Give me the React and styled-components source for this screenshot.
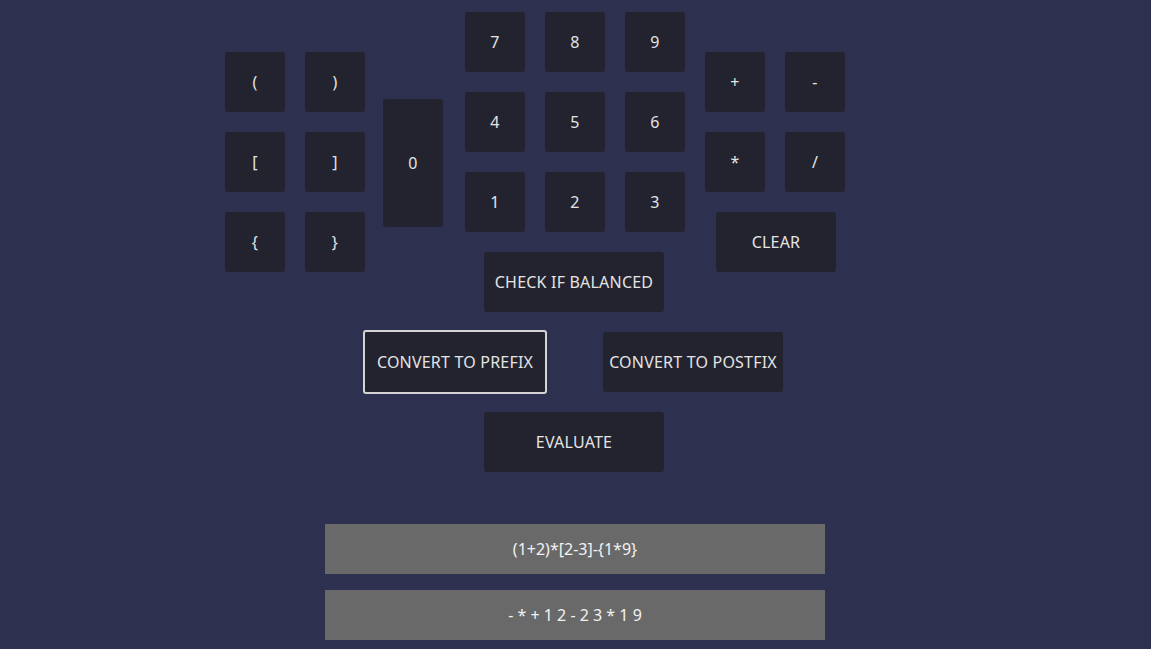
import React, { useState } from "react";
import styled, { createGlobalStyle } from "styled-components";

const GlobalStyle = createGlobalStyle`
  html, body {
    margin: 0;
    padding: 0;
    background: #2e3050;
    font-family: "Noto Sans", "Open Sans", sans-serif;
  }
`;

const Page = styled.div`
  display: flex;
  flex-direction: column;
  align-items: center;
  padding: 12px 1px 0 0;
  min-height: 637px;
`;

const Keypad = styled.div`
  display: grid;
  grid-template-columns: 1fr auto 1fr;
  align-items: center;
  column-gap: 20px;
  width: 100%;
`;

const LeftSide = styled.div`
  justify-self: end;
  display: flex;
  align-items: center;
  gap: 18px;
  margin-right: 2px;
`;

const RightSide = styled.div`
  justify-self: start;
  display: flex;
  flex-direction: column;
  align-items: center;
  gap: 20px;
`;

const Center = styled.div`
  display: flex;
  flex-direction: column;
  align-items: center;
  gap: 20px;
`;

const KeyGrid = styled.div`
  display: grid;
  grid-template-columns: repeat(${(p) => p.cols}, 60px);
  gap: 20px;
`;

const Key = styled.button`
  width: ${(p) => p.w || 60}px;
  height: ${(p) => p.h || 60}px;
  background: #22232f;
  color: #e4e4e4;
  border: ${(p) => (p.active ? "2px solid #d4d4d4" : "none")};
  border-radius: 3px;
  font-family: inherit;
  font-size: 16px;
  letter-spacing: 0.2px;
  padding: 0;
  margin: ${(p) => (p.active ? "-2px" : "0")};
  box-sizing: content-box;
  cursor: pointer;
  text-transform: uppercase;
`;

const ZeroKey = styled(Key)`
  margin-top: 2px;
`;

const WideKey = styled(Key)`
  margin-right: 2px;
`;

const ClearKey = styled(Key)`
  margin-left: 2px;
`;

const ActionRow = styled.div`
  display: flex;
  gap: 58px;
  margin-top: 20px;
  margin-right: 2px;
`;

const Single = styled.div`
  margin-top: 20px;
  margin-right: 2px;
`;

const Display = styled.div`
  width: 500px;
  height: 50px;
  background: #696969;
  color: #f2f2f2;
  font-size: 16px;
  display: flex;
  align-items: center;
  justify-content: center;
  margin-top: ${(p) => p.top}px;
  white-space: pre;
`;

const parens = ["(", ")", "[", "]", "{", "}"];
const digits = ["7", "8", "9", "4", "5", "6", "1", "2", "3"];
const ops = ["+", "-", "*", "/"];

export default function App() {
  const [expr, setExpr] = useState("(1+2)*[2-3]-{1*9}");
  const [result] = useState("- * + 1 2 - 2 3 * 1 9");
  const add = (c) => setExpr(expr + c);

  return (
    <Page>
      <GlobalStyle />
      <Keypad>
        <LeftSide>
          <KeyGrid cols={2}>
            {parens.map((k) => (
              <Key key={k} onClick={() => add(k)}>
                {k}
              </Key>
            ))}
          </KeyGrid>
          <ZeroKey h={128} onClick={() => add("0")}>
            0
          </ZeroKey>
        </LeftSide>
        <Center>
          <KeyGrid cols={3}>
            {digits.map((k) => (
              <Key key={k} onClick={() => add(k)}>
                {k}
              </Key>
            ))}
          </KeyGrid>
          <WideKey w={180}>Check if balanced</WideKey>
        </Center>
        <RightSide>
          <KeyGrid cols={2}>
            {ops.map((k) => (
              <Key key={k} onClick={() => add(k)}>
                {k}
              </Key>
            ))}
          </KeyGrid>
          <ClearKey w={120} onClick={() => setExpr("")}>
            Clear
          </ClearKey>
        </RightSide>
      </Keypad>
      <ActionRow>
        <Key w={180} active>
          Convert to prefix
        </Key>
        <Key w={180}>Convert to postfix</Key>
      </ActionRow>
      <Single>
        <Key w={180}>Evaluate</Key>
      </Single>
      <Display top={52}>{expr}</Display>
      <Display top={16}>{result}</Display>
    </Page>
  );
}
